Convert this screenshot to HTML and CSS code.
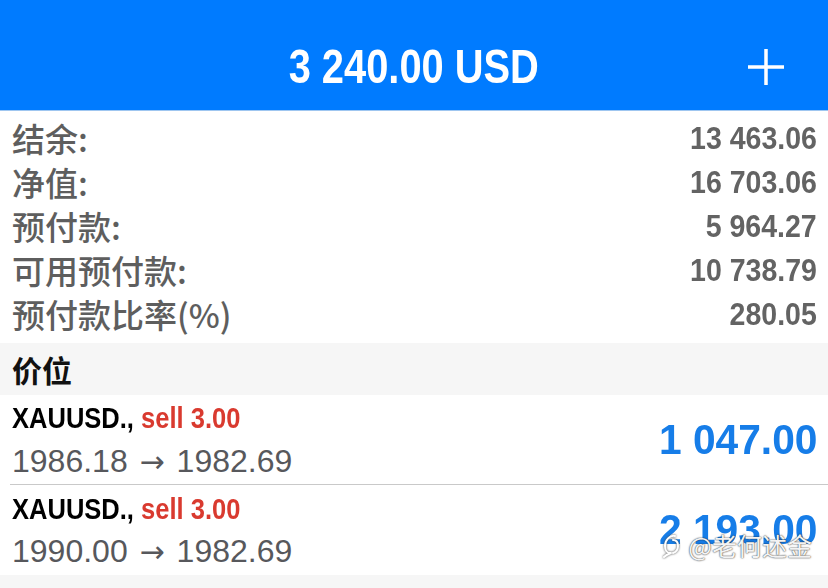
FILE: index.html
```html
<!DOCTYPE html>
<html lang="zh-CN">
<head>
<meta charset="utf-8">
<title>交易</title>
<link rel="stylesheet" href="styles.css">
</head>
<body>
<div class="app">
  <header class="topbar">
    <div class="topbar-side"></div>
    <h1 class="title"><span class="title-text">3 240.00 USD</span></h1>
    <div class="topbar-side topbar-right">
      <button class="add-btn" aria-label="添加">
        <svg width="36" height="36" viewBox="0 0 36 36"><path d="M18 0V36M0 18H36" stroke="#fff" stroke-width="3.5" fill="none"/></svg>
      </button>
    </div>
  </header>

  <section class="summary">
    <div class="summary-row"><span class="label">结余:</span><span class="value"><span class="num">13 463.06</span></span></div>
    <div class="summary-row"><span class="label">净值:</span><span class="value"><span class="num">16 703.06</span></span></div>
    <div class="summary-row"><span class="label">预付款:</span><span class="value"><span class="num">5 964.27</span></span></div>
    <div class="summary-row"><span class="label">可用预付款:</span><span class="value"><span class="num">10 738.79</span></span></div>
    <div class="summary-row"><span class="label">预付款比率(%)</span><span class="value"><span class="num">280.05</span></span></div>
  </section>

  <div class="section-head">价位</div>

  <ul class="positions">
    <li class="position">
      <div class="pos-info">
        <div class="pos-title"><span class="pos-title-inner"><span class="symbol">XAUUSD.,</span> <span class="side">sell 3.00</span></span></div>
        <div class="pos-prices">1986.18 <span class="arrow">→</span> 1982.69</div>
      </div>
      <div class="pos-profit"><span class="profit-num">1 047.00</span></div>
    </li>
    <li class="position">
      <div class="pos-info">
        <div class="pos-title"><span class="pos-title-inner"><span class="symbol">XAUUSD.,</span> <span class="side">sell 3.00</span></span></div>
        <div class="pos-prices">1990.00 <span class="arrow">→</span> 1982.69</div>
      </div>
      <div class="pos-profit"><span class="profit-num">2 193.00</span></div>
    </li>
  </ul>

  <div class="watermark">
    <svg class="wm-logo" width="24" height="26" viewBox="0 0 24 26"><path d="M15 4C10 3 5 8 5 14c0 4 2 7 5 7M11 21c-3 1-5 2-7 4M13 8c3 0 5 2 5 6 0 3-2 6-5 7" stroke="#fff" stroke-width="2" fill="none" stroke-linecap="round"/></svg>
    <span class="wm-text">@老何述金</span>
  </div>
</div>
</body>
</html>
```

FILE: styles.css
```css
* { box-sizing: border-box; }
html, body { margin: 0; padding: 0; }
body {
  background: #f6f6f6;
  font-family: "Liberation Sans", Arial, "Noto Sans CJK SC", sans-serif;
  width: 828px;
  height: 588px;
  overflow: hidden;
}
.app { position: relative; width: 828px; height: 588px; }

.topbar {
  height: 111px;
  background: #007bff;
  border-bottom: 1px solid #9fc6f0;
  display: grid;
  grid-template-columns: 1fr auto 1fr;
  align-items: center;
  padding-top: 24px;
}
.title {
  margin: 0;
  color: #fff;
  font-size: 48px;
  font-weight: 700;
  line-height: 1;
  white-space: nowrap;
}
.title-text { display: inline-block; transform: scaleX(0.83); }
.topbar-right { display: flex; justify-content: flex-end; padding-right: 44px; }
.add-btn {
  background: none; border: 0; padding: 0; margin: 0;
  width: 36px; height: 36px; display: block;
}
.add-btn svg { display: block; }

.summary {
  background: #fff;
  padding: 5px 11px 7px 12px;
}
.summary-row {
  height: 44px;
  display: flex;
  align-items: center;
  justify-content: space-between;
}
.label {
  font-family: "Noto Sans CJK SC", sans-serif;
  font-size: 33px;
  font-weight: 500;
  color: #5e5e5e;
  line-height: 1;
}
.value {
  font-size: 31px;
  font-weight: 700;
  color: #636363;
  line-height: 1;
}
.num { display: inline-block; transform: scaleX(0.92); transform-origin: right center; }

.section-head {
  height: 52px;
  background: #f6f6f6;
  padding-left: 12px;
  display: flex;
  align-items: center;
  font-family: "Noto Sans CJK SC", sans-serif;
  font-size: 30px;
  font-weight: 700;
  color: #111;
}

.positions {
  list-style: none;
  margin: 0;
  padding: 0 0 0 10px;
  background: #fff;
}
.position {
  height: 90px;
  display: flex;
  align-items: center;
  justify-content: space-between;
  padding: 0 11px 0 2px;
}
.position:first-child { border-bottom: 1px solid #c9c9c9; }
.pos-info { display: flex; flex-direction: column; }
.pos-title {
  height: 42px;
  display: flex;
  align-items: center;
  font-size: 29px;
  font-weight: 700;
  white-space: nowrap;
}
.pos-title-inner { display: inline-block; transform: scaleX(0.88); transform-origin: left center; }
.symbol { color: #000; }
.side { color: #d93a2f; }
.pos-prices {
  height: 42px;
  line-height: 42px;
  font-size: 32px;
  font-weight: 400;
  color: #57585c;
  white-space: nowrap;
}
.arrow {
  font-family: "DejaVu Sans", sans-serif;
  font-size: 30px;
  font-weight: 400;
  margin: 0 3px;
}
.pos-profit {
  font-size: 42px;
  font-weight: 700;
  color: #167de8;
  line-height: 1;
}
.profit-num { display: inline-block; transform: scaleX(0.97); transform-origin: right center; }

.watermark {
  position: absolute;
  right: 16px;
  top: 532px;
  display: flex;
  align-items: center;
  gap: 4px;
  color: rgba(255,255,255,0.95);
  font-family: "Noto Sans CJK SC", sans-serif;
  font-size: 25px;
  line-height: 1;
  text-shadow: 0 0 1px #444, 0 0 2px rgba(0,0,0,0.6);
}
.wm-logo { display: block; filter: drop-shadow(0 0 1px #444); }
```
